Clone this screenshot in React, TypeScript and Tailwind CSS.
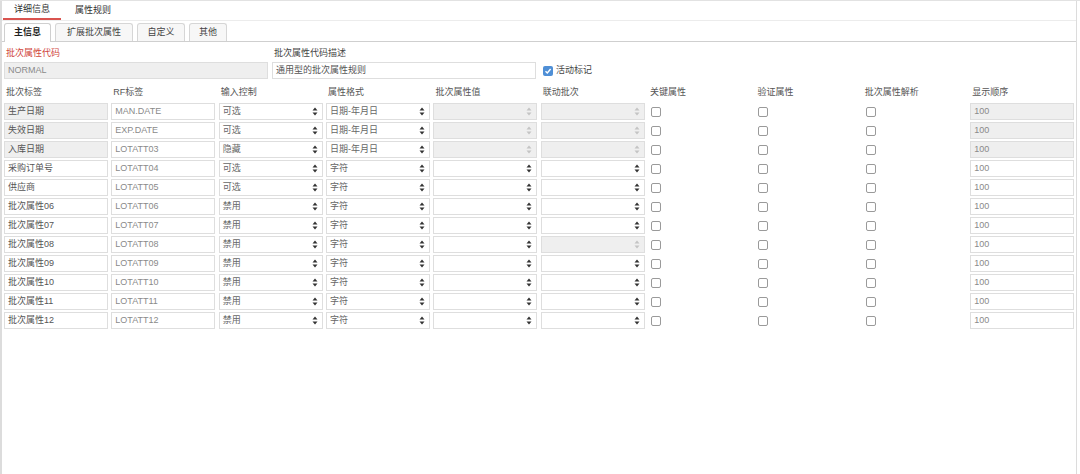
import React from 'react';

type Row = {
  label: string;
  rf: string;
  ctrl: string;
  fmt: string;
  sys: boolean; // system rows: label & order greyed out
  valDisabled: boolean;
  linkDisabled: boolean;
};

const rows: Row[] = [
  { label: '生产日期', rf: 'MAN.DATE', ctrl: '可选', fmt: '日期-年月日', sys: true, valDisabled: true, linkDisabled: true },
  { label: '失效日期', rf: 'EXP.DATE', ctrl: '可选', fmt: '日期-年月日', sys: true, valDisabled: true, linkDisabled: true },
  { label: '入库日期', rf: 'LOTATT03', ctrl: '隐藏', fmt: '日期-年月日', sys: true, valDisabled: true, linkDisabled: true },
  { label: '采购订单号', rf: 'LOTATT04', ctrl: '可选', fmt: '字符', sys: false, valDisabled: false, linkDisabled: false },
  { label: '供应商', rf: 'LOTATT05', ctrl: '可选', fmt: '字符', sys: false, valDisabled: false, linkDisabled: false },
  { label: '批次属性06', rf: 'LOTATT06', ctrl: '禁用', fmt: '字符', sys: false, valDisabled: false, linkDisabled: false },
  { label: '批次属性07', rf: 'LOTATT07', ctrl: '禁用', fmt: '字符', sys: false, valDisabled: false, linkDisabled: false },
  { label: '批次属性08', rf: 'LOTATT08', ctrl: '禁用', fmt: '字符', sys: false, valDisabled: false, linkDisabled: true },
  { label: '批次属性09', rf: 'LOTATT09', ctrl: '禁用', fmt: '字符', sys: false, valDisabled: false, linkDisabled: false },
  { label: '批次属性10', rf: 'LOTATT10', ctrl: '禁用', fmt: '字符', sys: false, valDisabled: false, linkDisabled: false },
  { label: '批次属性11', rf: 'LOTATT11', ctrl: '禁用', fmt: '字符', sys: false, valDisabled: false, linkDisabled: false },
  { label: '批次属性12', rf: 'LOTATT12', ctrl: '禁用', fmt: '字符', sys: false, valDisabled: false, linkDisabled: false },
];

const headers = ['批次标签', 'RF标签', '输入控制', '属性格式', '批次属性值', '联动批次', '关键属性', '验证属性', '批次属性解析', '显示顺序'];

function Arrows({ disabled }: { disabled?: boolean }) {
  return (
    <svg width="6" height="9" viewBox="0 0 6 9" className="shrink-0">
      <path d="M3 0.5 L5.5 3.5 H0.5 Z" fill={disabled ? '#c4c4c4' : '#333'} />
      <path d="M3 8.5 L5.5 5.5 H0.5 Z" fill={disabled ? '#c4c4c4' : '#333'} />
    </svg>
  );
}

function Field({ text, gray, dim }: { text: string; gray?: boolean; dim?: boolean }) {
  return (
    <div
      className={`h-[17px] border border-[#dedede] px-[3px] flex items-center whitespace-nowrap overflow-hidden ${
        gray ? 'bg-[#efefef]' : 'bg-white'
      } ${dim ? 'text-[#8a8a8a]' : 'text-[#555]'}`}
    >
      {text}
    </div>
  );
}

function Select({ text, disabled }: { text?: string; disabled?: boolean }) {
  return (
    <div
      className={`h-[17px] border border-[#dedede] pl-[3px] pr-[4px] flex items-center justify-between text-[#666] ${
        disabled ? 'bg-[#efefef]' : 'bg-white'
      }`}
    >
      <span>{text ?? ''}</span>
      <Arrows disabled={disabled} />
    </div>
  );
}

function Box({ checked }: { checked?: boolean }) {
  if (checked) {
    return (
      <span className="w-[10px] h-[10px] rounded-[2px] bg-[#4f8fd6] flex items-center justify-center">
        <svg width="8" height="8" viewBox="0 0 8 8">
          <path d="M1.5 4.2 L3.3 6 L6.6 2" stroke="white" strokeWidth="1.4" fill="none" />
        </svg>
      </span>
    );
  }
  return <span className="w-[10px] h-[10px] rounded-[2px] border border-[#9a9a9a] bg-white block" />;
}

export default function App() {
  return (
    <div
      className="w-[1080px] h-[474px] bg-white text-[9px] text-[#555] overflow-hidden border-t border-[#e2e2e2]"
      style={{ fontFamily: '"Liberation Sans", "Noto Sans CJK SC", sans-serif' }}
    >
      <div className="w-[1077px] h-full border-l-2 border-r border-[#dcdcdc] relative">
        {/* top tabs */}
        <div className="flex h-[20px] items-end border-b border-[#ececec]">
          <div className="w-[58px] h-full flex items-center justify-center text-[#333] border-b-2 border-[#d9534f] ml-[1px]">
            详细信息
          </div>
          <div className="w-[58px] h-full flex items-center justify-center text-[#333] ml-[3px]">属性规则</div>
        </div>

        {/* sub tabs */}
        <div className="flex items-end gap-[4px] pl-[2px] h-[21px] border-b border-[#cfcfcf]">
          <div className="h-[19px] w-[47px] -mb-px bg-white border border-b-0 border-[#cfcfcf] rounded-t-[3px] flex items-center justify-center text-[#222] font-bold">
            主信息
          </div>
          <div className="h-[18px] w-[78px] bg-[#f7f7f7] border border-b-0 border-[#d6d6d6] rounded-t-[3px] flex items-center justify-center text-[#444]">
            扩展批次属性
          </div>
          <div className="h-[18px] w-[48px] bg-[#f7f7f7] border border-b-0 border-[#d6d6d6] rounded-t-[3px] flex items-center justify-center text-[#444]">
            自定义
          </div>
          <div className="h-[18px] w-[38px] bg-[#f7f7f7] border border-b-0 border-[#d6d6d6] rounded-t-[3px] flex items-center justify-center text-[#444]">
            其他
          </div>
        </div>

        {/* code row */}
        <div className="flex items-end pl-[2px] pt-[5px] gap-[4px]">
          <div className="w-[264px] flex flex-col gap-[2px]">
            <span className="text-[#d0453c] pl-[2px] leading-[13px]">批次属性代码</span>
            <Field text="NORMAL" gray dim />
          </div>
          <div className="w-[264px] flex flex-col gap-[2px]">
            <span className="pl-[2px] leading-[13px] text-[#444]">批次属性代码描述</span>
            <Field text="通用型的批次属性规则" />
          </div>
          <div className="h-[17px] flex items-center gap-[3px] ml-[3px]">
            <Box checked />
            <span className="text-[#444]">活动标记</span>
          </div>
        </div>

        {/* table */}
        <div className="grid grid-cols-10 gap-x-[3.5px] gap-y-[2px] pl-[2px] pr-[2px] pt-[6px]">
          {headers.map((h) => (
            <div key={h} className="h-[16px] pl-[2px] flex items-center text-[#555]">
              {h}
            </div>
          ))}
          {rows.map((r) => (
            <React.Fragment key={r.label}>
              <Field text={r.label} gray={r.sys} />
              <Field text={r.rf} dim />
              <Select text={r.ctrl} />
              <Select text={r.fmt} />
              <Select disabled={r.valDisabled} />
              <Select disabled={r.linkDisabled} />
              <div className="h-[17px] flex items-center pl-[3px]">
                <Box />
              </div>
              <div className="h-[17px] flex items-center pl-[3px]">
                <Box />
              </div>
              <div className="h-[17px] flex items-center pl-[3px]">
                <Box />
              </div>
              <Field text="100" gray={r.sys} dim />
            </React.Fragment>
          ))}
        </div>
      </div>
    </div>
  );
}
